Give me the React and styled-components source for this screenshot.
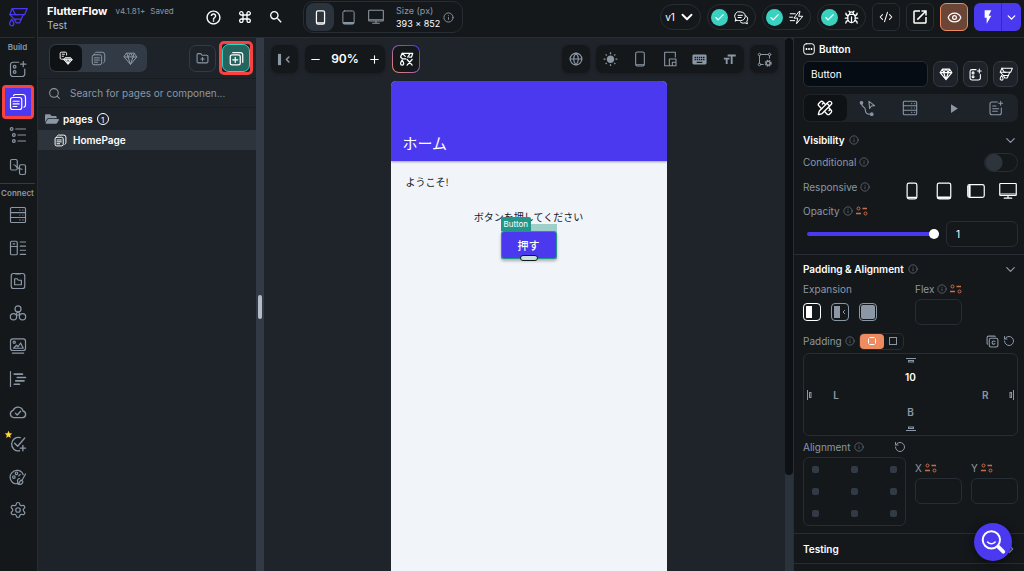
import React from 'react';
import styled, { createGlobalStyle, css } from 'styled-components';
import {
    Bug,
    Check,
    ChevronDown,
    ChevronRight,
    CodeXml,
    Eye,
    FolderPlus,
    Globe,
    Info,
    Minus,
    PencilRuler,
    Plus,
    RotateCcw,
    Search,
    Settings
} from 'lucide-react';
import { FaFolderOpen } from 'react-icons/fa';
import {
    MdFlashOn,
    MdFormatSize,
    MdHelpOutline,
    MdKeyboard,
    MdKeyboardCommandKey,
    MdOpenInNew,
    MdPlayArrow,
    MdSearch,
    MdStar,
    MdWbSunny
} from 'react-icons/md';

const color = {
    base: '#14181b',
    panel: '#1d2329',
    canvas: '#1f232a',
    line: '#262d34',
    raised: '#323a45',
    muted: '#8b97a5',
    text: '#ffffff',
    primary: '#4b39ef',
    teal: '#39d2c0',
    green: '#249689',
    orange: '#ee8b60',
    mark: '#f9423f'
};

const GlobalStyle = createGlobalStyle`
    * {
        box-sizing: border-box;
    }
    body {
        margin: 0;
        background: ${color.base};
        color: ${color.text};
        font-family: Inter, 'Noto Sans CJK JP', sans-serif;
        font-size: 10px;
        line-height: 12px;
    }
    button,
    input {
        font: inherit;
        color: inherit;
    }
    button {
        display: flex;
        align-items: center;
        justify-content: center;
        padding: 0;
        border: none;
        background: none;
        cursor: pointer;
    }
    svg {
        display: block;
        flex: none;
    }
`;

/* ---------- icons ---------- */

const Glyph = ({ size = 18, width = 1.6, children }) => (
    <svg
        width={size}
        height={size}
        viewBox="0 0 24 24"
        fill="none"
        stroke="currentColor"
        strokeWidth={width}
        strokeLinecap="round"
        strokeLinejoin="round"
        aria-hidden="true"
    >
        {children}
    </svg>
);

const Logo = props => (
    <Glyph {...props}>
        <path d="M5 2H23l-3 7H9L5 2z" />
        <path d="M5 2 2 9l5.5 5.5H16L18.5 9M2 9h7l3 0" />
        <path d="M7.500 14.500 10 19h4l2-4.500" />
        <path d="M4.500 14.500C2.500 17.500 2 18.500 2 20a2.500 2.500 0 0 0 5 0c0-1.500-.5-2.500-2.500-5.500z" />
    </Glyph>
);

const GenerateMark = props => (
    <Glyph {...props}>
        <path d="M5 2h17l-2 6h-4M5 2 2.500 8l3 3H11M5 2l5 5" />
        <path d="M5 13c-2 3-2.500 4-2.500 5.500a2.500 2.500 0 0 0 5 0C7.500 17 7 16 5 13z" />
        <path d="M13 12l8 9M21 12l-8 9M17 3.500 14 8" />
    </Glyph>
);

const WidgetAdd = props => (
    <Glyph {...props}>
        <path d="M13 3H5.500A3.500 3.500 0 0 0 2 6.500v12A3.500 3.500 0 0 0 5.500 22h12a3.500 3.500 0 0 0 3.500-3.500V12M19 2v7M15.500 5.500h7" />
        <circle cx="7.500" cy="9" r="1.8" />
        <circle cx="7.500" cy="16" r="1.8" />
    </Glyph>
);

const PagesIcon = props => (
    <Glyph {...props}>
        <rect x="2" y="6" width="15" height="16" rx="3" />
        <path d="M6 3.500C6.500 2.500 7.500 2 8.500 2H18a4 4 0 0 1 4 4v10c0 1.500-.8 2.500-2 3M5.500 11h8M5.500 14.500h8M5.500 18h5" />
    </Glyph>
);

const PageAdd = props => (
    <Glyph {...props}>
        <rect x="2" y="6" width="16" height="16" rx="3" />
        <path d="M6 2.500h12.500A3.500 3.500 0 0 1 22 6v12M10 10v8M6 14h8" />
    </Glyph>
);

const Tree = props => (
    <Glyph {...props}>
        <circle cx="3.500" cy="4" r="1.800" />
        <circle cx="6.500" cy="12" r="1.800" />
        <circle cx="6.500" cy="20" r="1.800" />
        <path d="M9 4h13M12 12h10M12 20h10" />
    </Glyph>
);

const Flow = props => (
    <Glyph {...props}>
        <rect x="2" y="2" width="9" height="14" rx="2" />
        <rect x="14" y="9" width="8" height="13" rx="2" />
        <path d="M6.500 9c3 0 3 6 11 6" />
    </Glyph>
);

const Database = props => (
    <Glyph {...props}>
        <rect x="2" y="2" width="20" height="20" rx="1.500" />
        <path d="M2 8.700h20M2 15.300h20M14.500 5.400h.1M18.500 5.400h.1M14.500 12h.1M18.500 12h.1M14.500 18.600h.1M18.500 18.600h.1" />
    </Glyph>
);

const DataTypes = props => (
    <Glyph {...props}>
        <rect x="2" y="3" width="9" height="18" rx="1.500" />
        <path d="M2 10h9M5.500 6.500h2M15 4h7M15 9.500h7M15 15h7M15 20.500h7" />
    </Glyph>
);

const AppFolder = props => (
    <Glyph {...props}>
        <rect x="3" y="2" width="18" height="20" rx="3" />
        <path d="M9 2.500h6M7.500 9h3.500l1.500 2h4v6h-9z" />
    </Glyph>
);

const Api = props => (
    <Glyph {...props}>
        <circle cx="12" cy="6.500" r="4" />
        <circle cx="6" cy="17" r="4.200" />
        <circle cx="18" cy="17" r="4.200" />
        <circle cx="12" cy="13" r="2" />
    </Glyph>
);

const Media = props => (
    <Glyph {...props}>
        <rect x="2" y="2.500" width="20" height="15.500" rx="3" />
        <path d="M6 15l4-4 2 2 3.500-5 3.500 7zM4.500 21.500h15" />
        <circle cx="7" cy="7" r="1.500" />
    </Glyph>
);

const Functions = props => (
    <Glyph {...props}>
        <path d="M2 2v20" />
        <path d="M7 5.500h11M11 10h11M9 14.500h11M7 19h7" strokeWidth="2.200" />
    </Glyph>
);

const Cloud = props => (
    <Glyph {...props} width={1.8}>
        <path d="M6.500 19.500a5 5 0 0 1-1-9.800 7 7 0 0 1 13.200 1A4.500 4.500 0 0 1 18.500 19.500zM8.500 13.500l2.500 2.500 4.500-5" />
    </Glyph>
);

const Tests = props => (
    <Glyph {...props} width={1.8}>
        <path d="M15 3.500A9 9 0 1 0 14 21M7.500 11l4 4L21 4M18.500 14v7M15 17.500h7" />
    </Glyph>
);

const Theme = props => (
    <Glyph {...props}>
        <path d="M19 9A9 9 0 1 0 9 21c3 0 3-1.500 2.500-3S12 14 14 14M22 8l-5 9M16 16c-2 1-1 4-4 5.500 3 1 6.500 0 6.500-3.500z" />
        <circle cx="10" cy="7" r="1.700" />
        <circle cx="6.500" cy="12" r="1.700" />
        <path d="M15 8.500l-2 2" />
    </Glyph>
);

const Diamond = props => (
    <Glyph {...props}>
        <path d="M6 3.500h12l4 6L12 21.500 2 9.500zM2 9.500h20M6 3.500l2 6 4 12 4-12 2-6M8 9.500l4-6 4 6" />
    </Glyph>
);

const PagesAndParts = props => (
    <Glyph {...props}>
        <path d="M8 14H4a2 2 0 0 1-2-2V4a2 2 0 0 1 2-2h7a2 2 0 0 1 2 2v3M5.500 5.500h4M5.500 9h2" />
        <path
            d="M11 11.500h9l2.500 3.500-7 8-7-8zM8.500 15h14M13 15l2.500 7 2.500-7"
            fill="currentColor"
            fillOpacity="0.5"
        />
    </Glyph>
);

const Phone = props => (
    <Glyph {...props}>
        <rect x="5.500" y="1.500" width="13" height="21" rx="2.500" />
        <path d="M6.500 20.500h11" />
    </Glyph>
);

const Tablet = props => (
    <Glyph {...props}>
        <rect x="3" y="1.500" width="18" height="21" rx="2.500" />
        <path d="M4 20h16M4 21.500h16" />
    </Glyph>
);

const Landscape = props => (
    <Glyph {...props}>
        <rect x="1" y="3.500" width="22" height="17" rx="2.500" />
        <path d="M2.500 5v14M4 4.500v15" />
    </Glyph>
);

const Desktop = props => (
    <Glyph {...props}>
        <rect x="1" y="2" width="22" height="16" rx="1" />
        <path d="M2 16h20M12 18v3M7 21.500h10" />
    </Glyph>
);

const DeviceSizes = props => (
    <Glyph {...props}>
        <path d="M10 22H4V2h16v7" />
        <path d="M11 22V12h10v10zM15.500 22v-5H21" />
    </Glyph>
);

const CanvasSettings = props => (
    <Glyph {...props}>
        <circle cx="4" cy="4" r="2" />
        <circle cx="20" cy="4" r="2" />
        <circle cx="4" cy="20" r="2" />
        <path d="M6 4h12M4 6v12M20 6v4M6 20h4" />
        <circle cx="18" cy="18" r="4" strokeWidth="3" strokeLinecap="butt" strokeDasharray="2.200 1" />
        <circle cx="18" cy="18" r="3" strokeWidth="2" />
    </Glyph>
);

const Comments = props => (
    <Glyph {...props}>
        <path d="M4 16.500 2 18l.5-4A7 7 0 0 1 10 3c5 0 8 3 8 7s-3 7-8 7c-2 0-4-.2-6-.5zM19 9c3 2 4 6 1.500 9l1 4-4-1.500c-3 1-6 .5-7.500-1.500M6.500 8.500h7M6.500 12h5" />
    </Glyph>
);

const Issues = props => (
    <Glyph {...props}>
        <path d="M15.500 3 8 13h6l-2 9 10-12h-6.500l2-7zM2 6h8M1 11.500h5M2 17h7" />
    </Glyph>
);

const Actions = props => (
    <Glyph {...props}>
        <circle cx="3.500" cy="4" r="1.800" fill="currentColor" />
        <circle cx="18" cy="20" r="1.800" fill="currentColor" />
        <path d="M4 6c0 5 5 3 5 8s2 6 6 6M14 2l8 6-4.500.5L15 12z" />
    </Glyph>
);

const Docs = props => (
    <Glyph {...props}>
        <path d="M14 3H6a3 3 0 0 0-3 3v13a3 3 0 0 0 3 3h11a3 3 0 0 0 3-3v-7M19 2v6M16 5h6M7 9h5M7 13h9M7 17h7" />
    </Glyph>
);

const BindIcon = () => (
    <svg width="12" height="10" viewBox="0 0 12 10" fill="none" stroke="#c46f4d">
        <circle cx="2.500" cy="2.500" r="1.500" />
        <path d="M6.500 2.500H11M0 7.500h5" strokeWidth="1.300" />
        <circle cx="9.500" cy="7.500" r="1.500" />
    </svg>
);

const ButtonBadge = () => (
    <Glyph size={12} width={2}>
        <rect x="1.500" y="1.500" width="21" height="21" rx="5" />
        <path d="M5.500 12h3M10.500 12h3M15.500 12h3" strokeWidth="4" strokeLinecap="butt" />
    </Glyph>
);

const SideEdge = ({ turn = 0 }) => (
    <svg width="12" height="12" viewBox="0 0 12 12" fill="none" stroke={color.muted}>
        <g transform={`rotate(${turn} 6 6)`}>
            <path d="M1 3.500h10" />
            <rect x="3.500" y="5.500" width="5" height="1.500" />
        </g>
    </svg>
);

/* ---------- shell ---------- */

const Shell = styled.div`
    display: flex;
    height: 100vh;
    overflow: hidden;
`;

const Main = styled.div`
    flex: 1;
    display: flex;
    flex-direction: column;
    min-width: 0;
`;

const Workspace = styled.div`
    flex: 1;
    display: flex;
    min-height: 0;
`;

const iconColor = css`
    color: ${({ $bright }) => ($bright ? color.text : color.muted)};
`;

/* ---------- rail ---------- */

const RailBar = styled.nav`
    display: flex;
    flex-direction: column;
    width: 38px;
    padding-right: 2px;
    border-right: 1px solid ${color.line};
`;

const LogoLink = styled.a`
    display: flex;
    justify-content: center;
    height: 38px;
    padding-top: 7px;
    border-bottom: 1px solid ${color.line};
    color: ${color.primary};
`;

const RailLabel = styled.div`
    height: 15px;
    padding-top: 3px;
    color: ${color.muted};
    font-size: 8px;
    font-weight: 600;
    text-align: center;
`;

const RailGroup = styled.div`
    display: grid;
    grid-auto-rows: 1fr;
    justify-items: center;
    height: ${({ $height }) => $height}px;
    margin-bottom: 1px;
    ${({ $ruled }) => $ruled && `box-shadow: 0 1px ${color.raised};`}
`;

const RailButton = styled.button`
    position: relative;
    width: 28px;
    color: ${({ $active }) => ($active ? color.text : color.muted)};
    ${({ $active }) =>
        $active &&
        css`
            align-self: center;
            width: 32px;
            height: 34px;
            border: 3px solid ${color.mark};
            border-radius: 4px;
            background: ${color.primary};
        `}
`;

const StarBadge = styled.span`
    position: absolute;
    top: 2px;
    left: 0;
    color: #ffd83d;
`;

/* ---------- header ---------- */

const HeaderBar = styled.header`
    display: flex;
    align-items: center;
    height: 38px;
    padding: 0 3px 3px 9px;
    border-bottom: 1px solid ${color.line};
`;

const Project = styled.div`
    width: 158px;
`;

const ProjectName = styled.div`
    display: flex;
    align-items: center;
    gap: 5px;
    height: 16px;
`;

const Brand = styled.strong`
    margin-right: 3px;
    font-size: 11px;
`;

const Tiny = styled.span`
    color: ${color.muted};
    font-size: 8px;
`;

const SubName = styled.div`
    color: #b0b8c2;
`;

const HeaderTools = styled.div`
    display: flex;
    gap: 15px;
`;

const DeviceGroup = styled.div`
    display: flex;
    align-items: center;
    height: 32px;
    margin-left: 19px;
    padding: 0 8px 0 2px;
    border: 1px solid ${color.line};
    border-radius: 10px;
`;

const DeviceButton = styled.button`
    width: 28px;
    height: 28px;
    border-radius: 8px;
    background: ${({ $active }) => ($active ? '#2b343c' : 'none')};
    color: ${({ $active }) => ($active ? color.text : color.muted)};
`;

const SizeText = styled.div`
    width: 47px;
    margin-left: 6px;
    font-size: 9px;
    line-height: 13px;
    white-space: nowrap;
`;

const Dim = styled.div`
    color: ${color.muted};
`;

const HeaderRight = styled.div`
    display: flex;
    align-items: center;
    gap: 6px;
    margin-left: auto;
`;

const Pill = styled.button`
    gap: 3px;
    width: 41px;
    height: 26px;
    border: 1px solid ${color.line};
    border-radius: 13px;
`;

const StatusPill = styled(Pill)`
    justify-content: flex-start;
    gap: 6px;
    width: 49px;
    padding-left: 3px;
`;

const CheckDot = styled.span`
    display: grid;
    place-items: center;
    width: 17px;
    height: 17px;
    border-radius: 50%;
    background: ${color.teal};
`;

const SquareButton = styled.button`
    width: 28px;
    height: 28px;
    border: 1px solid ${({ $warm }) => ($warm ? color.orange : color.line)};
    border-radius: 6px;
    background: ${({ $warm }) => ($warm ? '#6b4536' : 'none')};
`;

const RunSplit = styled.div`
    display: flex;
    border-radius: 6px;
    background: ${color.primary};
`;

const RunButton = styled.button`
    width: ${({ $narrow }) => ($narrow ? 20 : 27)}px;
    height: 28px;
    ${({ $narrow }) => $narrow && 'border-left: 1px solid #3629b8;'}
`;

/* ---------- page panel ---------- */

const PagePanel = styled.aside`
    width: 218px;
    background: ${color.panel};
`;

const PanelTools = styled.div`
    display: flex;
    align-items: center;
    height: 41px;
    padding: 0 3px 0 11px;
    border-bottom: 1px solid #171c20;
`;

const Segments = styled.div`
    display: flex;
    height: 28px;
    padding: 1px;
    border-radius: 7px;
    background: ${color.raised};
`;

const Segment = styled.button`
    width: 32px;
    border-radius: 6px;
    background: ${({ $active }) => ($active ? '#0f1214' : 'none')};
    color: ${({ $active }) => ($active ? color.text : color.muted)};
`;

const FolderButton = styled.button`
    width: 27px;
    height: 27px;
    margin: 0 3px 0 auto;
    border: 1px solid ${color.raised};
    border-radius: 7px;
    color: ${color.muted};
`;

const MarkedFrame = styled.div`
    border: 3px solid ${color.mark};
    border-radius: 5px;
`;

const AddButton = styled.button`
    width: 28px;
    height: 28px;
    border: 1px solid ${color.teal};
    border-radius: 7px;
    background: #24655f;
`;

const SearchRow = styled.label`
    display: flex;
    align-items: center;
    gap: 9px;
    height: 29px;
    padding: 0 10px;
    border-bottom: 1px solid #171c20;
    color: ${color.muted};
`;

const SearchInput = styled.input`
    flex: 1;
    min-width: 0;
    padding: 0;
    border: none;
    background: none;
    outline: none;
    &::placeholder {
        color: ${color.muted};
    }
`;

const TreeRow = styled.div`
    display: flex;
    align-items: center;
    gap: ${({ $selected }) => ($selected ? 6 : 4)}px;
    height: ${({ $selected }) => ($selected ? 20 : 22)}px;
    padding-left: ${({ $selected }) => ($selected ? 16 : 7)}px;
    background: ${({ $selected }) => ($selected ? '#2d343c' : 'none')};
    font-weight: 600;
`;

const Count = styled.span`
    display: grid;
    place-items: center;
    width: 12px;
    height: 12px;
    border: 1px solid ${color.text};
    border-radius: 50%;
    font-size: 8px;
    font-weight: 400;
`;

const Divider = styled.div`
    display: flex;
    align-items: center;
    width: 8px;
    padding: 4px 0 0 2px;
    background: ${color.raised};
`;

const Grip = styled.div`
    width: 4px;
    height: 24px;
    border-radius: 2px;
    background: #b4bcc8;
`;

/* ---------- canvas ---------- */

const CanvasArea = styled.main`
    position: relative;
    flex: 1;
    display: flex;
    flex-direction: column;
    min-width: 0;
    background: ${color.canvas};
`;

const CanvasTools = styled.div`
    display: flex;
    justify-content: space-between;
    padding: 7px 15px 8px 7px;
`;

const ToolGroup = styled.div`
    display: flex;
    gap: ${({ $gap }) => $gap}px;
`;

const ToolBox = styled.div`
    display: flex;
    align-items: center;
    width: ${({ $width }) => $width}px;
    height: 28px;
    border-radius: 7px;
    background: ${color.base};
    box-shadow: 0 1px 3px #14181b80;
`;

const ToolButton = styled.button`
    flex: 1;
    height: 28px;
    ${iconColor}
`;

const ZoomValue = styled.output`
    width: 38px;
    font-size: 12px;
    font-weight: 600;
    text-align: center;
`;

const AiButton = styled.button`
    width: 28px;
    height: 28px;
    border: 1px solid transparent;
    border-radius: 7px;
    background: linear-gradient(${color.base}, ${color.base}) padding-box,
        linear-gradient(45deg, ${color.orange}, #9c5bb4 50%, ${color.primary}) border-box;
`;

const ScrollTrack = styled.div`
    position: absolute;
    top: 0;
    right: 0;
    bottom: 0;
    width: 8px;
    background: #2a323c;
`;

const ScrollThumb = styled.div`
    height: 82%;
    border-radius: 4px;
    background: #0e1113;
`;

const Device = styled.div`
    flex: 1;
    align-self: center;
    width: 276px;
    overflow: hidden;
    border-radius: 5px 5px 0 0;
    background: #f1f4f8;
    color: #14181b;
    font-family: 'Noto Sans CJK JP', sans-serif;
`;

const AppBar = styled.div`
    display: flex;
    align-items: flex-end;
    height: 80px;
    padding: 0 12px 8px;
    background: ${color.primary};
    box-shadow: 0 1px 2px #14181b60;
    color: ${color.text};
    font-size: 15px;
    line-height: 20px;
`;

const AppBody = styled.div`
    display: flex;
    flex-direction: column;
    padding: 14px 15px;
    line-height: 14px;
`;

const Prompt = styled.p`
    margin: 21px 0 0;
    text-align: center;
`;

const Selection = styled.div`
    position: relative;
    align-self: center;
    width: 56px;
    padding-top: 7px;
    background: #9fcfca;
`;

const SelectionTag = styled.span`
    position: absolute;
    top: -7px;
    left: 0;
    padding: 0 3px;
    border-radius: 2px 2px 0 0;
    background: ${color.green};
    color: ${color.text};
    font-family: Inter, sans-serif;
    font-size: 8px;
    line-height: 14px;
`;

const PressButton = styled.button`
    width: 56px;
    height: 28px;
    border: 1px solid ${color.green};
    border-radius: 3px;
    background: ${color.primary};
    box-shadow: 0 2px 3px #14181b50;
    color: ${color.text};
    font-size: 11px;
    font-weight: 500;
`;

const ResizeHandle = styled.span`
    position: absolute;
    bottom: -2px;
    left: 19px;
    width: 18px;
    height: 6px;
    border: 1px solid #14181b;
    border-radius: 3px;
    background: #c6e2df;
`;

/* ---------- properties ---------- */

const PropsPanel = styled.aside`
    width: 231px;
    overflow: hidden;
    border-left: 1px solid ${color.line};
    background: ${color.base};
`;

const Section = styled.section`
    padding: ${({ $pad }) => $pad};
    border-bottom: 1px solid ${color.line};
`;

const Row = styled.div`
    display: flex;
    align-items: center;
    justify-content: ${({ $spread }) => ($spread ? 'space-between' : 'flex-start')};
    gap: 5px;
    height: ${({ $height }) => $height || 20}px;
    ${iconColor}
`;

const Heading = styled.h2`
    display: flex;
    align-items: center;
    gap: 4px;
    margin: 0;
    color: ${color.text};
    font-size: 10px;
    font-weight: 600;
`;

const Label = styled.label`
    display: flex;
    align-items: center;
    gap: 3px;
    color: ${color.muted};
`;

const NameInput = styled.input`
    flex: 1;
    min-width: 0;
    height: 26px;
    padding: 0 7px;
    border: 1px solid ${color.line};
    border-radius: 6px;
    background: #060c14;
`;

const NameRow = styled.div`
    display: flex;
    gap: 5px;
    margin: 2px 0 7px;
`;

const NameButton = styled.button`
    width: 25px;
    height: 26px;
    border: 1px solid ${color.raised};
    border-radius: 7px;
    background: ${color.panel};
`;

const TabStrip = styled.div`
    display: flex;
    height: 28px;
    padding: 1px;
    margin-bottom: 8px;
    border-radius: 7px;
    background: ${color.panel};
`;

const Tab = styled.button`
    flex: 1;
    border-radius: 6px;
    background: ${({ $active }) => ($active ? '#0f1214' : 'none')};
    ${iconColor}
`;

const Toggle = styled.input`
    appearance: none;
    width: 34px;
    height: 19px;
    margin: 2px 0 0;
    border: 1px solid ${color.line};
    border-radius: 10px;
    background: radial-gradient(circle at 9px 50%, #2d343c 8px, transparent 9px);
`;

const DeviceList = styled.div`
    display: flex;
    gap: 14px;
    padding: 8px 1px 0 0;
    color: ${color.text};
`;

const OpacitySlider = styled.input`
    appearance: none;
    flex: 1;
    min-width: 0;
    height: 4px;
    margin: 0 2px 0 4px;
    border-radius: 2px;
    background: ${color.primary};
    &::-webkit-slider-thumb {
        appearance: none;
        width: 10px;
        height: 10px;
        border-radius: 50%;
        background: ${color.text};
    }
`;

const Field = styled.input`
    width: ${({ $width }) => $width}px;
    height: 26px;
    padding: 0 9px;
    border: 1px solid ${color.line};
    border-radius: 6px;
    background: none;
`;

const Columns = styled.div`
    display: grid;
    grid-template-columns: 103px 1fr;
    gap: 9px;
`;

const AxisPair = styled.div`
    display: flex;
    justify-content: space-between;
    padding-top: 22px;
`;

const Choices = styled.div`
    display: flex;
    align-items: center;
    gap: 10px;
    height: 26px;
`;

const Choice = styled.button`
    width: 18px;
    height: 18px;
    border: 1px solid ${({ $active }) => ($active ? color.text : color.muted)};
    border-radius: 4px;
    ${({ $active }) => `color: ${$active ? color.text : color.muted};`}
`;

const PaddingHead = styled.div`
    display: flex;
    align-items: center;
    height: 20px;
    margin-top: 6px;
    color: ${color.muted};
`;

const PaddingTools = styled.div`
    display: flex;
    gap: 4px;
    margin-left: auto;
    padding-right: 3px;
`;

const PadMode = styled.div`
    display: flex;
    height: 17px;
    margin-left: 4px;
    border: 1px solid ${color.line};
    border-radius: 5px;
`;

const PadModeButton = styled.button`
    width: ${({ $active }) => ($active ? 24 : 19)}px;
    height: 15px;
    border-radius: 4px;
    background: ${({ $active }) => ($active ? color.orange : 'none')};
    color: ${({ $active }) => ($active ? color.text : color.muted)};
`;

const PaddingBox = styled.div`
    display: grid;
    grid-template-columns: 48px 1fr 48px;
    grid-template-rows: 30px 1fr 30px;
    align-items: center;
    height: 83px;
    margin-top: 2px;
    border: 1px solid ${color.line};
    border-radius: 6px;
    color: ${color.muted};
    font-weight: 600;
`;

const EdgeStack = styled.div`
    grid-column: 2;
    grid-row: ${({ $row }) => $row};
    display: flex;
    flex-direction: column;
    align-items: center;
    gap: 4px;
    ${({ $bright }) => $bright && `color: ${color.text};`}
`;

const EdgeRow = styled.div`
    grid-column: ${({ $column }) => $column};
    grid-row: 2;
    display: flex;
    align-items: center;
    justify-content: space-between;
    padding: ${({ $column }) => ($column === 3 ? '0 0 0 13px' : '0 13px 0 0')};
`;

const AlignBox = styled.div`
    display: grid;
    grid-template-columns: repeat(3, 7px);
    justify-content: space-between;
    align-content: space-between;
    height: 69px;
    padding: 8px;
    border: 1px solid ${color.line};
    border-radius: 6px;
`;

const AlignDot = styled.button`
    width: 7px;
    height: 7px;
    border-radius: 2px;
    background: ${color.raised};
`;

const HelpFab = styled.button`
    position: fixed;
    right: 12px;
    bottom: 10px;
    width: 38px;
    height: 38px;
    border-radius: 50%;
    background: ${color.primary};
    box-shadow: 0 2px 10px #00000080;
`;

const InfoMark = () => <Info size={10} strokeWidth={1.8} color="#66717d" />;

const railBuild = [
    { name: 'Widgets', icon: WidgetAdd },
    { name: 'Pages', icon: PagesIcon, active: true },
    { name: 'Widget tree', icon: Tree },
    { name: 'Storyboard', icon: Flow }
];

const railConnect = [
    { name: 'Database', icon: Database },
    { name: 'Data types', icon: DataTypes },
    { name: 'App values', icon: AppFolder },
    { name: 'API calls', icon: Api },
    { name: 'Media', icon: Media },
    { name: 'Functions', icon: Functions },
    { name: 'Cloud', icon: Cloud },
    { name: 'Tests', icon: Tests, starred: true },
    { name: 'Theme', icon: Theme },
    { name: 'Settings', icon: Settings }
];

const statuses = [
    { name: 'Comments', icon: Comments },
    { name: 'Issues', icon: Issues },
    { name: 'Bugs', icon: Bug }
];

const Rail = () => {
    const renderItem = ({ name, icon: Icon, active, starred }) => (
        <RailButton key={name} aria-label={name} $active={active}>
            <Icon size={18} strokeWidth={1.6} />
            {starred && (
                <StarBadge>
                    <MdStar size={9} />
                </StarBadge>
            )}
        </RailButton>
    );

    return (
        <RailBar>
            <LogoLink href="#home" aria-label="Home">
                <Logo size={20} width={1.5} />
            </LogoLink>
            <RailLabel>Build</RailLabel>
            <RailGroup $height={130} $ruled>
                {railBuild.map(renderItem)}
            </RailGroup>
            <RailLabel>Connect</RailLabel>
            <RailGroup $height={327}>{railConnect.map(renderItem)}</RailGroup>
        </RailBar>
    );
};

const Header = () => (
    <HeaderBar>
        <Project>
            <ProjectName>
                <Brand>FlutterFlow</Brand>
                <Tiny>v4.1.81+</Tiny>
                <Tiny>Saved</Tiny>
            </ProjectName>
            <SubName>Test</SubName>
        </Project>
        <HeaderTools>
            <button aria-label="Help">
                <MdHelpOutline size={17} />
            </button>
            <button aria-label="Commands">
                <MdKeyboardCommandKey size={16} />
            </button>
            <button aria-label="Search">
                <MdSearch size={16} />
            </button>
        </HeaderTools>
        <DeviceGroup>
            <DeviceButton aria-label="Phone" $active>
                <Phone size={15} width={2} />
            </DeviceButton>
            <DeviceButton aria-label="Tablet">
                <Tablet size={15} />
            </DeviceButton>
            <DeviceButton aria-label="Desktop">
                <Desktop size={16} />
            </DeviceButton>
            <SizeText>
                <Dim>Size (px)</Dim>
                393 × 852
            </SizeText>
            <Info size={11} color={color.muted} />
        </DeviceGroup>
        <HeaderRight>
            <Pill>
                v1
                <ChevronDown size={18} strokeWidth={2.5} />
            </Pill>
            {statuses.map(({ name, icon: Icon }) => (
                <StatusPill key={name} aria-label={name}>
                    <CheckDot>
                        <Check size={11} strokeWidth={2.5} />
                    </CheckDot>
                    <Icon size={15} strokeWidth={2} />
                </StatusPill>
            ))}
            <SquareButton aria-label="Code">
                <CodeXml size={14} strokeWidth={1.8} />
            </SquareButton>
            <SquareButton aria-label="Open">
                <MdOpenInNew size={18} />
            </SquareButton>
            <SquareButton aria-label="Preview" $warm>
                <Eye size={15} />
            </SquareButton>
            <RunSplit>
                <RunButton aria-label="Run">
                    <MdFlashOn size={16} />
                </RunButton>
                <RunButton aria-label="Run options" $narrow>
                    <ChevronDown size={13} strokeWidth={2.5} />
                </RunButton>
            </RunSplit>
        </HeaderRight>
    </HeaderBar>
);

const PageList = () => (
    <PagePanel>
        <PanelTools>
            <Segments>
                <Segment aria-label="All" $active>
                    <PagesAndParts size={14} />
                </Segment>
                <Segment aria-label="Pages">
                    <PagesIcon size={15} />
                </Segment>
                <Segment aria-label="Components">
                    <Diamond size={15} />
                </Segment>
            </Segments>
            <FolderButton aria-label="New folder">
                <FolderPlus size={13} />
            </FolderButton>
            <MarkedFrame>
                <AddButton aria-label="New page">
                    <PageAdd size={15} width={2} />
                </AddButton>
            </MarkedFrame>
        </PanelTools>
        <SearchRow>
            <Search size={13} />
            <SearchInput
                aria-label="Search pages"
                placeholder="Search for pages or componen..."
            />
        </SearchRow>
        <TreeRow>
            <FaFolderOpen size={14} color={color.muted} />
            pages
            <Count>1</Count>
        </TreeRow>
        <TreeRow $selected>
            <PagesIcon size={13} width={1.8} />
            HomePage
        </TreeRow>
    </PagePanel>
);

const Canvas = () => (
    <CanvasArea>
        <CanvasTools>
            <ToolGroup $gap={7}>
                <ToolBox $width={27}>
                    <ToolButton aria-label="Collapse panel">
                        <Glyph size={15} width={2.5}>
                            <path d="M4 3v18" strokeWidth="5" strokeLinecap="butt" />
                            <path d="M19 8l-4 4 4 4" />
                        </Glyph>
                    </ToolButton>
                </ToolBox>
                <ToolBox $width={80}>
                    <ToolButton aria-label="Zoom out" $bright>
                        <Minus size={13} />
                    </ToolButton>
                    <ZoomValue>90%</ZoomValue>
                    <ToolButton aria-label="Zoom in" $bright>
                        <Plus size={13} />
                    </ToolButton>
                </ToolBox>
                <AiButton aria-label="Generate">
                    <GenerateMark size={15} width={2} />
                </AiButton>
            </ToolGroup>
            <ToolGroup $gap={6}>
                <ToolBox $width={28}>
                    <ToolButton aria-label="Language">
                        <Globe size={14} />
                    </ToolButton>
                </ToolBox>
                <ToolBox $width={148}>
                    <ToolButton aria-label="Light mode">
                        <MdWbSunny size={15} />
                    </ToolButton>
                    <ToolButton aria-label="Device frame">
                        <Phone size={16} />
                    </ToolButton>
                    <ToolButton aria-label="Device sizes">
                        <DeviceSizes size={16} />
                    </ToolButton>
                    <ToolButton aria-label="Keyboard">
                        <MdKeyboard size={17} />
                    </ToolButton>
                    <ToolButton aria-label="Text scale">
                        <MdFormatSize size={15} />
                    </ToolButton>
                </ToolBox>
                <ToolBox $width={28}>
                    <ToolButton aria-label="Canvas settings">
                        <CanvasSettings size={15} />
                    </ToolButton>
                </ToolBox>
            </ToolGroup>
        </CanvasTools>
        <Device>
            <AppBar>ホーム</AppBar>
            <AppBody>
                <div>ようこそ!</div>
                <Prompt>ボタンを押してください</Prompt>
                <Selection>
                    <PressButton>押す</PressButton>
                    <SelectionTag>Button</SelectionTag>
                    <ResizeHandle />
                </Selection>
            </AppBody>
        </Device>
        <ScrollTrack>
            <ScrollThumb />
        </ScrollTrack>
    </CanvasArea>
);

const WidgetSection = () => (
    <Section $pad="1px 6px 7px 9px">
        <Row>
            <Heading>
                <ButtonBadge />
                Button
            </Heading>
        </Row>
        <NameRow>
            <NameInput aria-label="Widget name" defaultValue="Button" />
            <NameButton aria-label="Make component">
                <Diamond size={14} width={2} />
            </NameButton>
            <NameButton aria-label="Wrap widget">
                <WidgetAdd size={13} width={2} />
            </NameButton>
            <NameButton aria-label="Generate">
                <Logo size={14} width={1.8} />
            </NameButton>
        </NameRow>
        <TabStrip>
            <Tab aria-label="Design" $active $bright>
                <PencilRuler size={16} />
            </Tab>
            <Tab aria-label="Actions">
                <Actions size={17} />
            </Tab>
            <Tab aria-label="Backend">
                <Database size={16} />
            </Tab>
            <Tab aria-label="Animations">
                <MdPlayArrow size={15} />
            </Tab>
            <Tab aria-label="Documentation">
                <Docs size={16} />
            </Tab>
        </TabStrip>
        <Row $spread>
            <Heading>
                Visibility
                <InfoMark />
            </Heading>
            <ChevronDown size={15} />
        </Row>
        <Row $height={23} $spread>
            <Label htmlFor="conditional">
                Conditional <InfoMark />
            </Label>
            <Toggle id="conditional" type="checkbox" role="switch" />
        </Row>
        <Row $height={28} $spread>
            <Label as="span">
                Responsive <InfoMark />
            </Label>
            <DeviceList>
                <Phone size={18} />
                <Tablet size={18} />
                <Landscape size={18} />
                <Desktop size={18} />
            </DeviceList>
        </Row>
        <Row>
            <Label htmlFor="opacity">
                Opacity <InfoMark />
                <BindIcon />
            </Label>
        </Row>
        <Row $height={26} $bright>
            <OpacitySlider
                id="opacity"
                type="range"
                min="0"
                max="1"
                step="0.1"
                defaultValue="1"
            />
            <Field aria-label="Opacity value" defaultValue="1" $width={72} />
        </Row>
    </Section>
);

const SpacingSection = () => (
    <Section $pad="4px 6px 7px 9px">
        <Row $spread>
            <Heading>
                Padding &amp; Alignment
                <InfoMark />
            </Heading>
            <ChevronDown size={15} />
        </Row>
        <Columns>
            <div>
                <Row>Expansion</Row>
                <Choices>
                    <Choice aria-label="Fixed" $active>
                        <svg width="14" height="14">
                            <rect x="1" y="1" width="6" height="12" fill="currentColor" />
                        </svg>
                    </Choice>
                    <Choice aria-label="Flexible">
                        <svg width="14" height="14" fill="none" stroke="currentColor">
                            <rect x="1" y="1" width="6" height="12" fill="currentColor" stroke="none" />
                            <path d="M12 5l-2 2 2 2" />
                        </svg>
                    </Choice>
                    <Choice aria-label="Expanded">
                        <svg width="14" height="14">
                            <rect width="14" height="14" rx="2" fill="currentColor" />
                        </svg>
                    </Choice>
                </Choices>
            </div>
            <div>
                <Row>
                    <Label htmlFor="flex">
                        Flex <InfoMark />
                        <BindIcon />
                    </Label>
                </Row>
                <Field id="flex" $width={47} />
            </div>
        </Columns>
        <PaddingHead>
            <Label as="span">
                Padding <InfoMark />
            </Label>
            <PadMode>
                <PadModeButton aria-label="Per side" $active>
                    <svg width="10" height="10" fill="none" stroke="currentColor">
                        <rect x="1.500" y="1.500" width="7" height="7" strokeDasharray="5 2" strokeDashoffset="-1" />
                    </svg>
                </PadModeButton>
                <PadModeButton aria-label="All sides">
                    <svg width="10" height="10" fill="none" stroke="currentColor">
                        <rect x="1.500" y="1.500" width="7" height="7" />
                    </svg>
                </PadModeButton>
            </PadMode>
            <PaddingTools>
                <Glyph size={13} width={2}>
                    <rect x="6" y="6" width="16" height="16" rx="3" />
                    <path d="M3 17a3 3 0 0 1-1-2V5a3 3 0 0 1 3-3h10c1 0 2 .5 2 1M16.500 12a3 3 0 1 0 0 4" />
                </Glyph>
                <RotateCcw size={12} />
            </PaddingTools>
        </PaddingHead>
        <PaddingBox>
            <EdgeStack $row={1} $bright>
                <SideEdge />
                10
            </EdgeStack>
            <EdgeRow $column={1}>
                <SideEdge turn={270} />
                L
            </EdgeRow>
            <EdgeRow $column={3}>
                R
                <SideEdge turn={90} />
            </EdgeRow>
            <EdgeStack $row={3}>
                B
                <SideEdge turn={180} />
            </EdgeStack>
        </PaddingBox>
        <Columns>
            <div>
                <Row $height={21} $spread>
                    <Label as="span">
                        Alignment <InfoMark />
                    </Label>
                    <RotateCcw size={12} />
                </Row>
                <AlignBox>
                    {[...Array(9).keys()].map(i => (
                        <AlignDot key={i} aria-label={`Alignment ${i + 1}`} />
                    ))}
                </AlignBox>
            </div>
            <AxisPair>
                {['X', 'Y'].map(axis => (
                    <div key={axis}>
                        <Row>
                            <Label htmlFor={`align-${axis}`}>
                                {axis} <BindIcon />
                            </Label>
                        </Row>
                        <Field id={`align-${axis}`} $width={47} />
                    </div>
                ))}
            </AxisPair>
        </Columns>
    </Section>
);

const Properties = () => (
    <PropsPanel>
        <WidgetSection />
        <SpacingSection />
        <Section $pad="0 6px 0 9px">
            <Row $height={29} $spread>
                <Heading>Testing</Heading>
                <ChevronRight size={14} />
            </Row>
        </Section>
    </PropsPanel>
);

export default function App() {
    return (
        <>
            <GlobalStyle />
            <Shell>
                <Rail />
                <Main>
                    <Header />
                    <Workspace>
                        <PageList />
                        <Divider>
                            <Grip />
                        </Divider>
                        <Canvas />
                        <Properties />
                    </Workspace>
                </Main>
            </Shell>
            <HelpFab aria-label="Help search">
                <Glyph size={26} width={1.8}>
                    <circle cx="10.500" cy="10" r="8" />
                    <path d="M7 12c2 2 5 2 7 0" strokeWidth="1.400" />
                    <path d="M17 16.500l4.500 4.500" strokeWidth="3.500" />
                </Glyph>
            </HelpFab>
        </>
    );
}
